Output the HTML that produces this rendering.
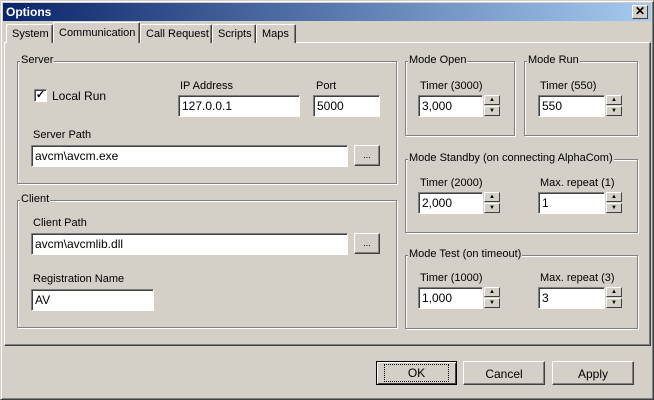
<!DOCTYPE html>
<html><head><style>
*{box-sizing:border-box;margin:0;padding:0}
body{width:654px;height:400px;background:#d4d0c8;font-family:"Liberation Sans",sans-serif;font-size:11px;color:#000;position:relative;overflow:hidden;white-space:nowrap}
.a{position:absolute}
.win{left:0;top:0;width:654px;height:400px;border:1px solid;border-color:#d4d0c8 #404040 #404040 #d4d0c8;box-shadow:inset 1px 1px #fff,inset -1px -1px #808080}
.title{left:3px;top:3px;width:648px;height:18px;background:linear-gradient(90deg,#0a246a,#a6caf0);color:#fff;font-weight:bold;font-size:12px;padding:2px 3px}
.close{left:632px;top:5px;width:16px;height:14px;background:#d4d0c8;border:1px solid;border-color:#fff #404040 #404040 #fff;font-size:12px;line-height:11px;text-align:center;font-weight:bold}
.panel{left:4px;top:42px;width:647px;height:304px;border:1px solid;border-color:#fff #404040 #404040 #fff;box-shadow:inset -1px -1px #808080}
.tab{top:24px;height:19px;border:1px solid;border-bottom:none;border-color:#fff #404040 #fff #fff;box-shadow:inset -1px 0 #808080;padding:3px 0 0 5px;border-radius:2px 2px 0 0;background:#d4d0c8}
.sel{top:22px;height:21px;z-index:2}
.grp{border:1px solid #808080;box-shadow:1px 1px #fff, inset 1px 1px #fff}
.lg{background:#d4d0c8;padding:0 1px;top:-8px;left:2px;position:absolute}
.in{background:#fff;border:1px solid;border-color:#808080 #fff #fff #808080;box-shadow:inset 1px 1px #404040;padding:4px 3px;height:22px;font-size:12px;line-height:13px}
.btn{background:#d4d0c8;border:1px solid;border-color:#fff #404040 #404040 #fff;box-shadow:inset -1px -1px #808080;text-align:center;font-size:12px}
.sp{width:16px;height:10px;background:#d4d0c8;border:1px solid;border-color:#fff #404040 #404040 #fff;font-size:6px;line-height:8px;text-align:center}
</style></head><body>
<div class="a win"></div>
<div class="a title">Options</div>
<div class="a close">✕</div>
<div class="a panel"></div>
<div class="a tab" style="left:6px;width:47px">System</div>
<div class="a tab sel" style="left:53px;width:87px;padding-top:4px">Communication</div>
<div class="a tab" style="left:140px;width:72px">Call Request</div>
<div class="a tab" style="left:212px;width:44px">Scripts</div>
<div class="a tab" style="left:256px;width:40px">Maps</div>

<div class="a grp" style="left:17px;top:61px;width:380px;height:123px"><span class="lg">Server</span></div>
<div class="a" style="left:34px;top:89px;width:13px;height:13px;background:#fff;border:1px solid;border-color:#808080 #fff #fff #808080;box-shadow:inset 1px 1px #404040;font-size:11px;line-height:10px;text-align:center;font-weight:bold">✓</div>
<div class="a" style="left:52px;top:89px;font-size:12px">Local Run</div>
<div class="a" style="left:180px;top:80px">IP Address</div>
<div class="a in" style="left:178px;top:95px;width:122px">127.0.0.1</div>
<div class="a" style="left:316px;top:80px">Port</div>
<div class="a in" style="left:313px;top:95px;width:67px">5000</div>
<div class="a" style="left:33px;top:129px">Server Path</div>
<div class="a in" style="left:31px;top:145px;width:317px">avcm\avcm.exe</div>
<div class="a btn" style="left:354px;top:145px;width:26px;height:21px;font-size:9px;line-height:18px">...</div>

<div class="a grp" style="left:17px;top:200px;width:380px;height:128px"><span class="lg">Client</span></div>
<div class="a" style="left:33px;top:217px">Client Path</div>
<div class="a in" style="left:31px;top:233px;width:317px">avcm\avcmlib.dll</div>
<div class="a btn" style="left:354px;top:233px;width:26px;height:21px;font-size:9px;line-height:18px">...</div>
<div class="a" style="left:33px;top:273px">Registration Name</div>
<div class="a in" style="left:31px;top:289px;width:123px">AV</div>

<div class="a grp" style="left:405px;top:61px;width:110px;height:75px"><span class="lg">Mode Open</span></div>
<div class="a" style="left:420px;top:80px">Timer (3000)</div>
<div class="a in" style="left:418px;top:95px;width:65px">3,000</div>
<div class="a sp" style="left:484px;top:95px">▲</div><div class="a sp" style="left:484px;top:106px">▼</div>

<div class="a grp" style="left:524px;top:61px;width:114px;height:75px"><span class="lg">Mode Run</span></div>
<div class="a" style="left:540px;top:80px">Timer (550)</div>
<div class="a in" style="left:538px;top:95px;width:67px">550</div>
<div class="a sp" style="left:606px;top:95px">▲</div><div class="a sp" style="left:606px;top:106px">▼</div>

<div class="a grp" style="left:405px;top:159px;width:233px;height:74px"><span class="lg">Mode Standby (on connecting AlphaCom)</span></div>
<div class="a" style="left:420px;top:177px">Timer (2000)</div>
<div class="a in" style="left:418px;top:192px;width:65px">2,000</div>
<div class="a sp" style="left:484px;top:192px">▲</div><div class="a sp" style="left:484px;top:203px">▼</div>
<div class="a" style="left:540px;top:177px">Max. repeat (1)</div>
<div class="a in" style="left:538px;top:192px;width:67px">1</div>
<div class="a sp" style="left:606px;top:192px">▲</div><div class="a sp" style="left:606px;top:203px">▼</div>

<div class="a grp" style="left:405px;top:255px;width:233px;height:74px"><span class="lg">Mode Test (on timeout)</span></div>
<div class="a" style="left:420px;top:272px">Timer (1000)</div>
<div class="a in" style="left:418px;top:287px;width:65px">1,000</div>
<div class="a sp" style="left:484px;top:287px">▲</div><div class="a sp" style="left:484px;top:298px">▼</div>
<div class="a" style="left:540px;top:272px">Max. repeat (3)</div>
<div class="a in" style="left:538px;top:287px;width:67px">3</div>
<div class="a sp" style="left:606px;top:287px">▲</div><div class="a sp" style="left:606px;top:298px">▼</div>

<div class="a btn" style="left:376px;top:361px;width:81px;height:24px;border:1px solid #000;box-shadow:inset 1px 1px #fff,inset -1px -1px #404040;padding-top:4px"><span style="outline:1px dotted #000;padding:0 22px;outline-offset:1px">OK</span></div>
<div class="a btn" style="left:463px;top:361px;width:82px;height:24px;padding-top:5px">Cancel</div>
<div class="a btn" style="left:552px;top:361px;width:82px;height:24px;padding-top:5px">Apply</div>
</body></html>
